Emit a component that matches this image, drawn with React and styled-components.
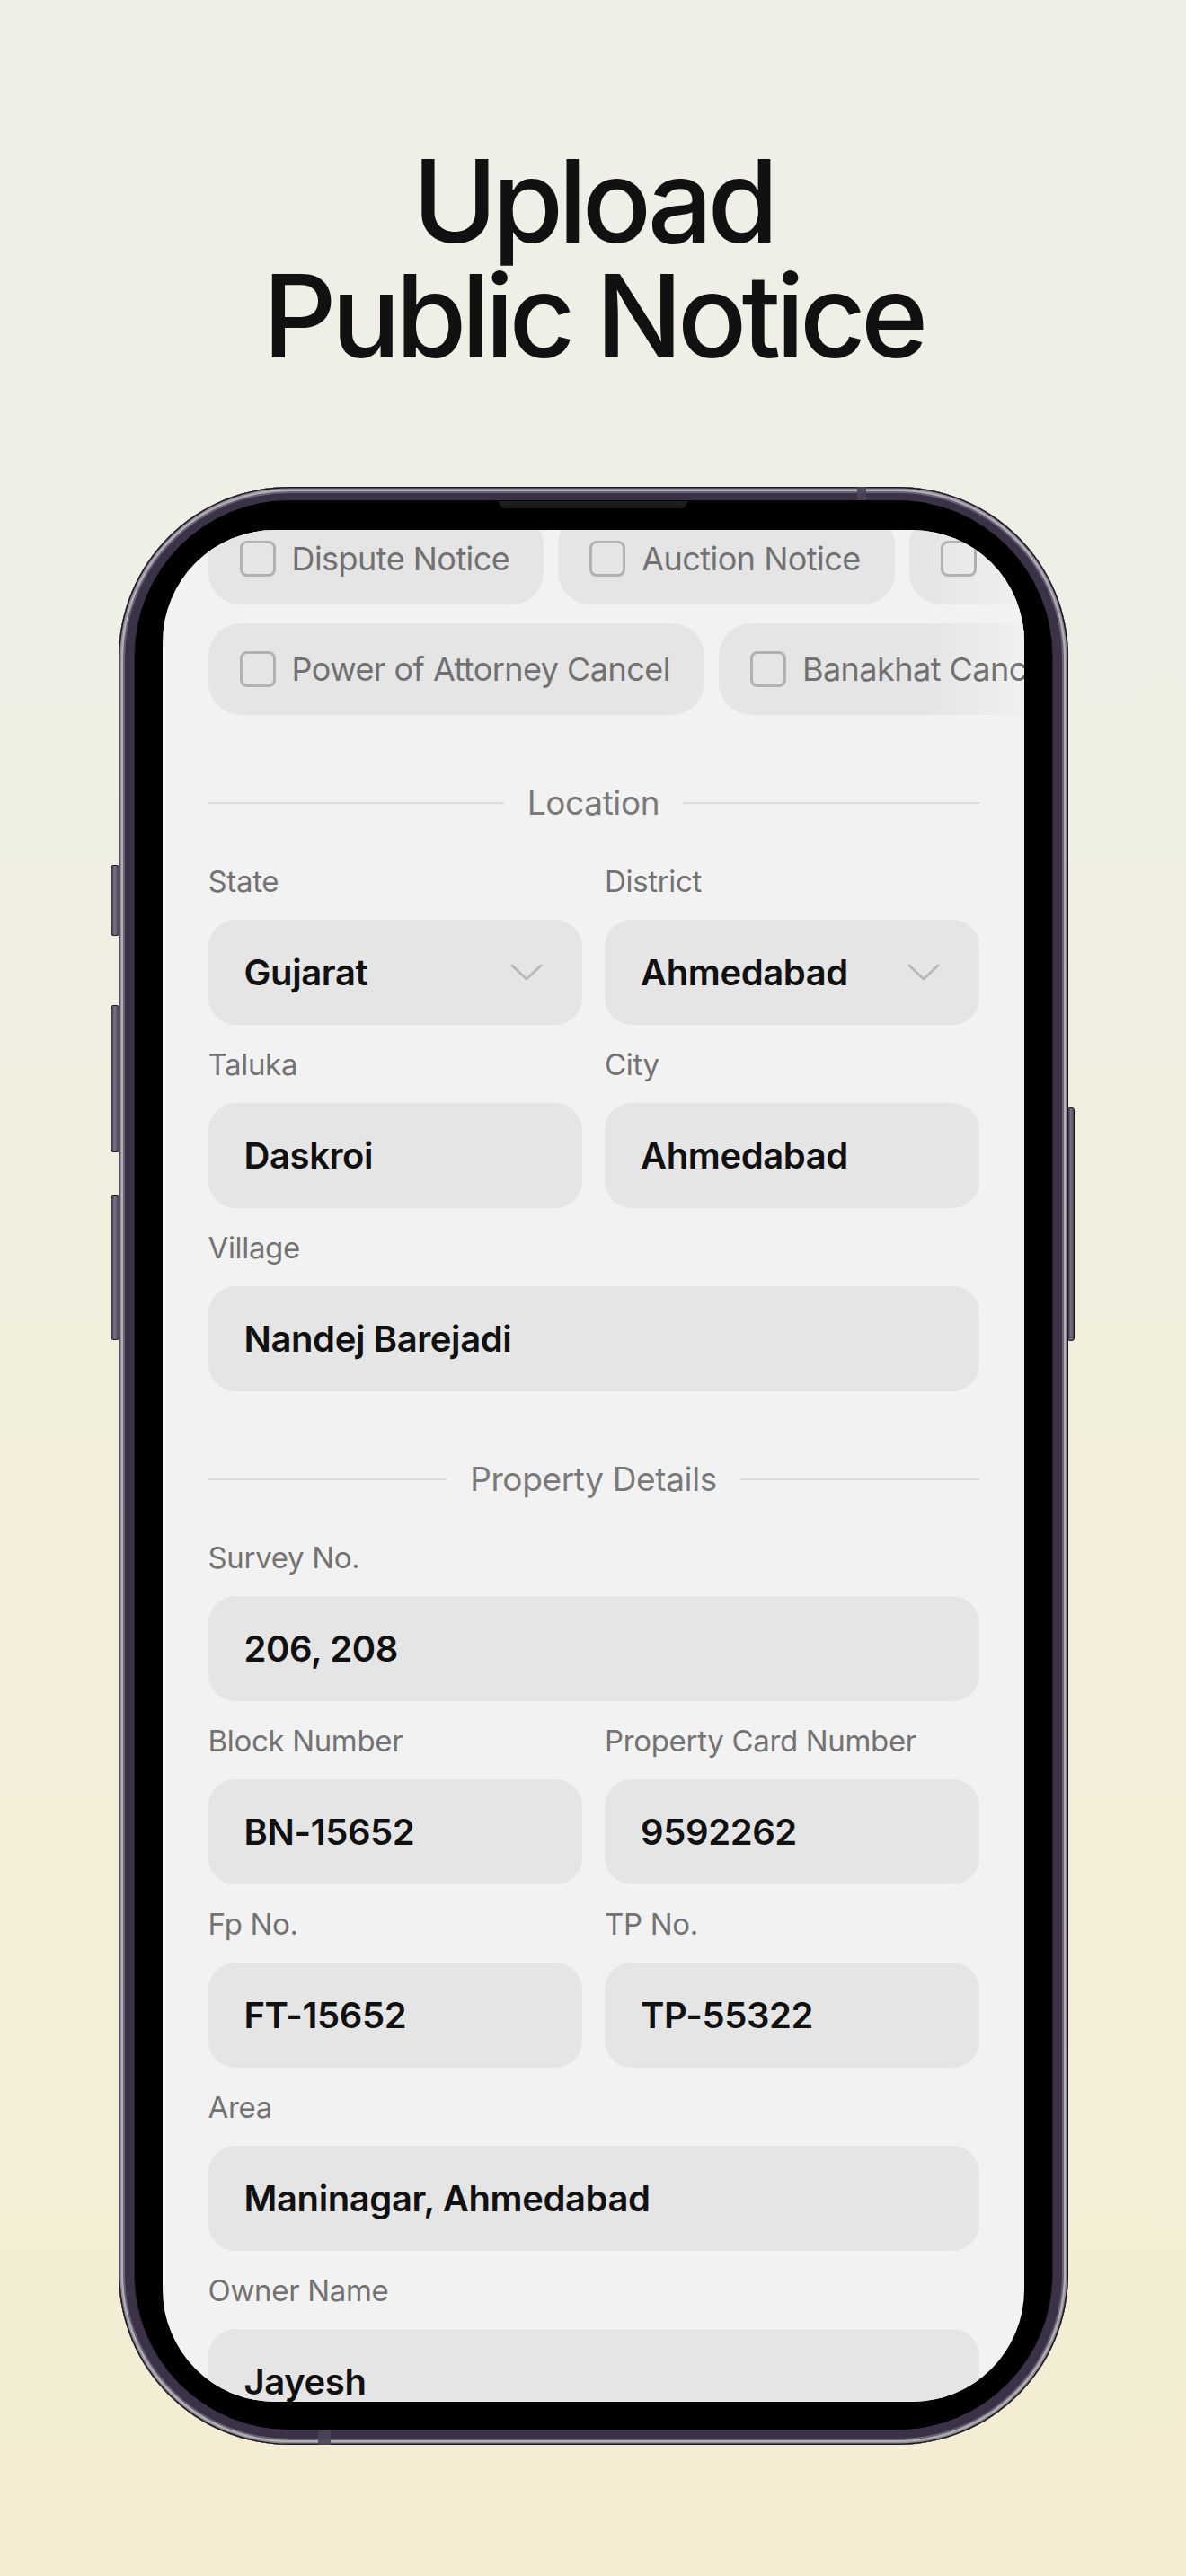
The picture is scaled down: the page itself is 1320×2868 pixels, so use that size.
import React from "react";
import styled, { createGlobalStyle } from "styled-components";

const GlobalStyle = createGlobalStyle`
  html, body { margin: 0; padding: 0; }
  body {
    font-family: Inter, "Noto Sans", "Liberation Sans", sans-serif;
    background: #f1efe2;
  }
  * { box-sizing: border-box; }
`;

const Page = styled.div`
  width: 1320px;
  height: 2868px;
  overflow: hidden;
  background: linear-gradient(180deg, #efefe8 0%, #f0efe4 30%, #f2eeda 60%, #f4edd2 100%);
  display: flex;
  flex-direction: column;
  align-items: center;
`;

const Title = styled.h1`
  margin: 160px 0 0;
  display: flex;
  flex-direction: column;
  align-items: center;
  font-family: Inter, "Liberation Sans", sans-serif;
  font-weight: 500;
  font-size: 128px;
  letter-spacing: -0.045em;
  color: #111111;
  text-align: center;
`;

const TitleLine = styled.span`
  display: block;
  height: 128px;
  line-height: 128px;
`;

const Phone = styled.div`
  position: relative;
  margin-top: 126px;
  width: 1057px;
  height: 2180px;
  padding: 15px 18px 17px;
  border-radius: 190px;
  background: #3c3448;
  box-shadow:
    inset 0 0 0 1.5px #1d1923,
    inset 0 0 0 3px #8f8b95,
    inset 0 0 0 5px #b3b0b7,
    inset 0 0 0 7px #6a6374,
    inset 0 0 0 17px #3b3247,
    inset 0 0 0 18px #241f2b;
`;

const SideButton = styled.div`
  position: absolute;
  ${(p) => (p.$side === "left" ? "left: -9px;" : "right: -7px;")}
  top: ${(p) => p.$top}px;
  width: ${(p) => (p.$side === "left" ? 10 : 8)}px;
  height: ${(p) => p.$h}px;
  border-radius: 3px;
  border: 1.5px solid #1c1820;
  background: linear-gradient(
    90deg,
    #3a3344 0%,
    #7a7387 45%,
    #4a4257 100%
  );
`;

const AntennaMark = styled.div`
  position: absolute;
  left: ${(p) => p.$left}px;
  ${(p) => (p.$bottom ? "bottom: 0;" : "top: 0;")}
  width: ${(p) => p.$w}px;
  height: 16px;
  background: #4b4358;
  opacity: 0.9;
`;

const Bezel = styled.div`
  position: relative;
  width: 100%;
  height: 100%;
  background: #000;
  border-radius: 172px;
  padding: 33px 31px 31px;
`;

const Speaker = styled.div`
  position: absolute;
  top: 1px;
  left: 50%;
  transform: translateX(-50%);
  width: 210px;
  height: 8px;
  border-radius: 0 0 8px 8px;
  background: #1c1c1e;
`;

const Screen = styled.div`
  position: relative;
  width: 100%;
  height: 100%;
  background: #f2f2f2;
  border-radius: 125px;
  overflow: hidden;
`;

const Content = styled.div`
  margin-top: -19px;
  padding: 0 50px 0 51px;
  display: flex;
  flex-direction: column;
`;

const ChipsArea = styled.div`
  position: relative;
  display: flex;
  flex-direction: column;
  gap: 21px;
`;

const ChipRow = styled.div`
  display: flex;
  gap: 16px;
`;

const Chip = styled.div`
  flex-shrink: 0;
  height: 102px;
  padding: 0 38px 0 35px;
  border-radius: 36px;
  background: #e5e5e5;
  display: flex;
  align-items: center;
  white-space: nowrap;
`;

const ChipInner = styled.span`
  position: relative;
  z-index: 2;
  display: flex;
  align-items: center;
  gap: 18px;
  font-size: 36px;
  color: #717171;
  letter-spacing: -0.015em;
`;

const CheckBox = styled.span`
  width: 40px;
  height: 40px;
  border: 3px solid #b1b1b1;
  border-radius: 8px;
  flex-shrink: 0;
`;

const EdgeFade = styled.div`
  position: absolute;
  z-index: 1;
  top: 0;
  bottom: 0;
  right: -50px;
  width: 110px;
  pointer-events: none;
  background: linear-gradient(
    90deg,
    rgba(242, 242, 242, 0) 0%,
    rgba(242, 242, 242, 0.85) 100%
  );
`;

const Section = styled.section`
  margin-top: 76px;
  display: flex;
  flex-direction: column;
  gap: 45px;
`;

const Divider = styled.div`
  height: 44px;
  display: flex;
  align-items: center;
  gap: 26px;
  font-size: 37px;
  line-height: 44px;
  color: #7a7a7a;
  letter-spacing: -0.01em;
  &::before,
  &::after {
    content: "";
    flex: 1;
    height: 2px;
    background: #dcdcdc;
  }
`;

const FieldGrid = styled.div`
  display: grid;
  grid-template-columns: 1fr 1fr;
  column-gap: 25px;
  row-gap: 24px;
`;

const Field = styled.div`
  grid-column: ${(p) => (p.$full ? "1 / -1" : "auto")};
  display: flex;
  flex-direction: column;
  gap: 23px;
  min-width: 0;
`;

const Label = styled.div`
  font-size: 33px;
  line-height: 40px;
  color: #737373;
  letter-spacing: -0.01em;
  white-space: nowrap;
`;

const InputBox = styled.div`
  height: 117px;
  border-radius: 30px;
  background: #e5e5e5;
  padding: 0 44px 0 40px;
  display: flex;
  align-items: center;
  justify-content: space-between;
  font-size: 40px;
  font-weight: 600;
  color: #111111;
  letter-spacing: -0.01em;
  white-space: nowrap;
`;

const Chevron = () => (
  <svg width="36" height="20" viewBox="0 0 36 20" fill="none">
    <polyline
      points="2,2 18,17 34,2"
      stroke="#b9b9b9"
      strokeWidth="3"
      strokeLinecap="round"
      strokeLinejoin="round"
    />
  </svg>
);

const chipRows = [
  ["Dispute Notice", "Auction Notice", "Title Clearance Notice"],
  ["Power of Attorney Cancel", "Banakhat Cancel"],
];

const location = [
  { label: "State", value: "Gujarat", select: true },
  { label: "District", value: "Ahmedabad", select: true },
  { label: "Taluka", value: "Daskroi" },
  { label: "City", value: "Ahmedabad" },
  { label: "Village", value: "Nandej Barejadi", full: true },
];

const property = [
  { label: "Survey No.", value: "206, 208", full: true },
  { label: "Block Number", value: "BN-15652" },
  { label: "Property Card Number", value: "9592262" },
  { label: "Fp No.", value: "FT-15652" },
  { label: "TP No.", value: "TP-55322" },
  { label: "Area", value: "Maninagar, Ahmedabad", full: true },
  { label: "Owner Name", value: "Jayesh", full: true },
];

const FormSection = ({ title, fields }) => (
  <Section>
    <Divider>{title}</Divider>
    <FieldGrid>
      {fields.map((f) => (
        <Field key={f.label} $full={f.full}>
          <Label>{f.label}</Label>
          <InputBox>
            <span>{f.value}</span>
            {f.select && <Chevron />}
          </InputBox>
        </Field>
      ))}
    </FieldGrid>
  </Section>
);

export default function App() {
  return (
    <>
      <GlobalStyle />
      <Page>
        <Title>
          <TitleLine>Upload</TitleLine>
          <TitleLine>Public Notice</TitleLine>
        </Title>
        <Phone>
          <SideButton $side="left" $top={421} $h={79} />
          <SideButton $side="left" $top={577} $h={164} />
          <SideButton $side="left" $top={789} $h={161} />
          <SideButton $side="right" $top={691} $h={260} />
          <AntennaMark $left={822} $w={10} />
          <AntennaMark $left={222} $w={14} $bottom />
          <Bezel>
            <Speaker />
            <Screen>
              <Content>
                <ChipsArea>
                  {chipRows.map((row, i) => (
                    <ChipRow key={i}>
                      {row.map((c) => (
                        <Chip key={c}>
                          <ChipInner>
                            <CheckBox />
                            {c}
                          </ChipInner>
                        </Chip>
                      ))}
                    </ChipRow>
                  ))}
                  <EdgeFade />
                </ChipsArea>
                <FormSection title="Location" fields={location} />
                <FormSection title="Property Details" fields={property} />
              </Content>
            </Screen>
          </Bezel>
        </Phone>
      </Page>
    </>
  );
}
